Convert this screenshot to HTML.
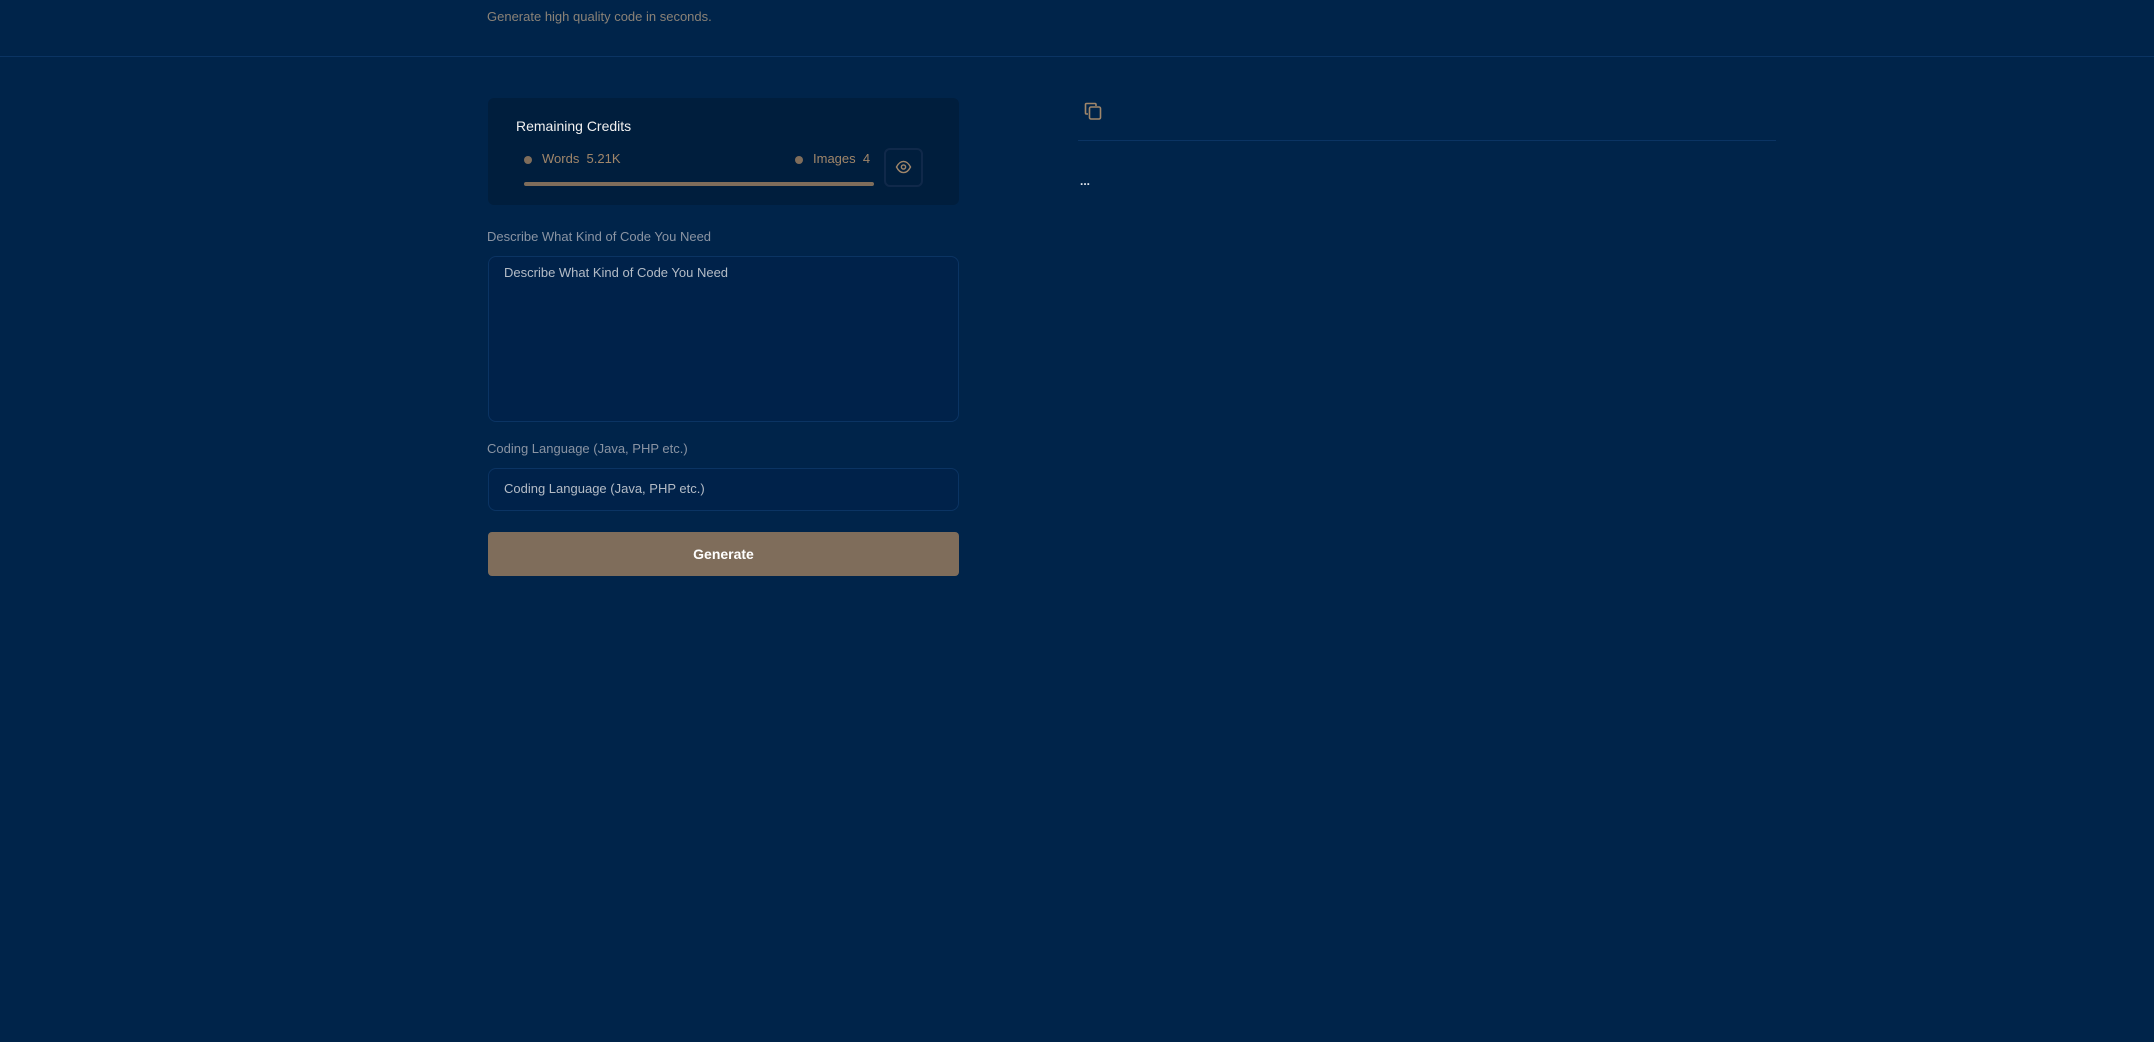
<!DOCTYPE html>
<html><head><meta charset="utf-8"><style>
*{box-sizing:border-box;margin:0;padding:0}
body{width:2154px;height:1042px;background:#00244a;font-family:"Liberation Sans",sans-serif;position:relative;overflow:hidden}
.a{position:absolute;white-space:nowrap}
</style></head><body>
<div class="a" style="left:487px;top:9px;font-size:13px;color:#8a8277">Generate high quality code in seconds.</div>
<div class="a" style="left:0;top:56px;width:2154px;height:1px;background:#0b3463"></div>

<div class="a" style="left:488px;top:98px;width:471px;height:107px;background:#001e3d;border-radius:6px"></div>
<div class="a" style="left:516px;top:118px;font-size:14px;color:#f0f0f0">Remaining Credits</div>
<div class="a" style="left:524px;top:156px;width:8px;height:8px;border-radius:50%;background:#7f6d5b"></div>
<div class="a" style="left:542px;top:151px;font-size:13px;color:#a0866a">Words&nbsp;&nbsp;5.21K</div>
<div class="a" style="left:795px;top:156px;width:8px;height:8px;border-radius:50%;background:#7f6d5b"></div>
<div class="a" style="left:813px;top:151px;font-size:13px;color:#a0866a">Images&nbsp;&nbsp;4</div>
<div class="a" style="left:524px;top:182px;width:350px;height:4px;border-radius:2px;background:#7f6d5b"></div>
<div class="a" style="left:884px;top:148px;width:39px;height:39px;border:2px solid #10294a;border-radius:6px"></div>
<svg class="a" style="left:895px;top:160px" width="17" height="14" viewBox="0 0 24 20"><path d="M2 10C5 4 9 2 12 2s7 2 10 8c-3 6-7 8-10 8S5 16 2 10z" fill="none" stroke="#a0866a" stroke-width="2"/><circle cx="12" cy="10" r="3" fill="none" stroke="#a0866a" stroke-width="2"/></svg>

<div class="a" style="left:487px;top:229px;font-size:13px;color:#8a94a3">Describe What Kind of Code You Need</div>
<div class="a" style="left:488px;top:256px;width:471px;height:166px;border:1px solid #0b3463;border-radius:8px;background:#00224a"></div>
<div class="a" style="left:504px;top:265px;font-size:13px;color:#b4bcc6">Describe What Kind of Code You Need</div>

<div class="a" style="left:487px;top:441px;font-size:13px;color:#8a94a3">Coding Language (Java, PHP etc.)</div>
<div class="a" style="left:488px;top:468px;width:471px;height:43px;border:1px solid #0b3463;border-radius:8px;background:#00224a"></div>
<div class="a" style="left:504px;top:481px;font-size:13px;color:#b4bcc6">Coding Language (Java, PHP etc.)</div>

<div class="a" style="left:488px;top:532px;width:471px;height:44px;border-radius:4px;background:#7f6d5b;color:#fff;font-size:14px;font-weight:bold;text-align:center;line-height:44px">Generate</div>

<svg class="a" style="left:1083px;top:101px" width="20" height="20" viewBox="0 0 20 20"><path d="M5 13H3.5A1 1 0 0 1 2.5 12V3.5A1 1 0 0 1 3.5 2.5H12A1 1 0 0 1 13 3.5V5" fill="none" stroke="#a0866a" stroke-width="1.6"/><rect x="6.5" y="6" width="11" height="12" rx="1.5" fill="none" stroke="#a0866a" stroke-width="1.6"/></svg>
<div class="a" style="left:1078px;top:140px;width:698px;height:1px;background:#0b3463"></div>
<div class="a" style="left:1080px;top:174px;font-size:12px;color:#e0e6ee;font-weight:bold">...</div>
</body></html>
